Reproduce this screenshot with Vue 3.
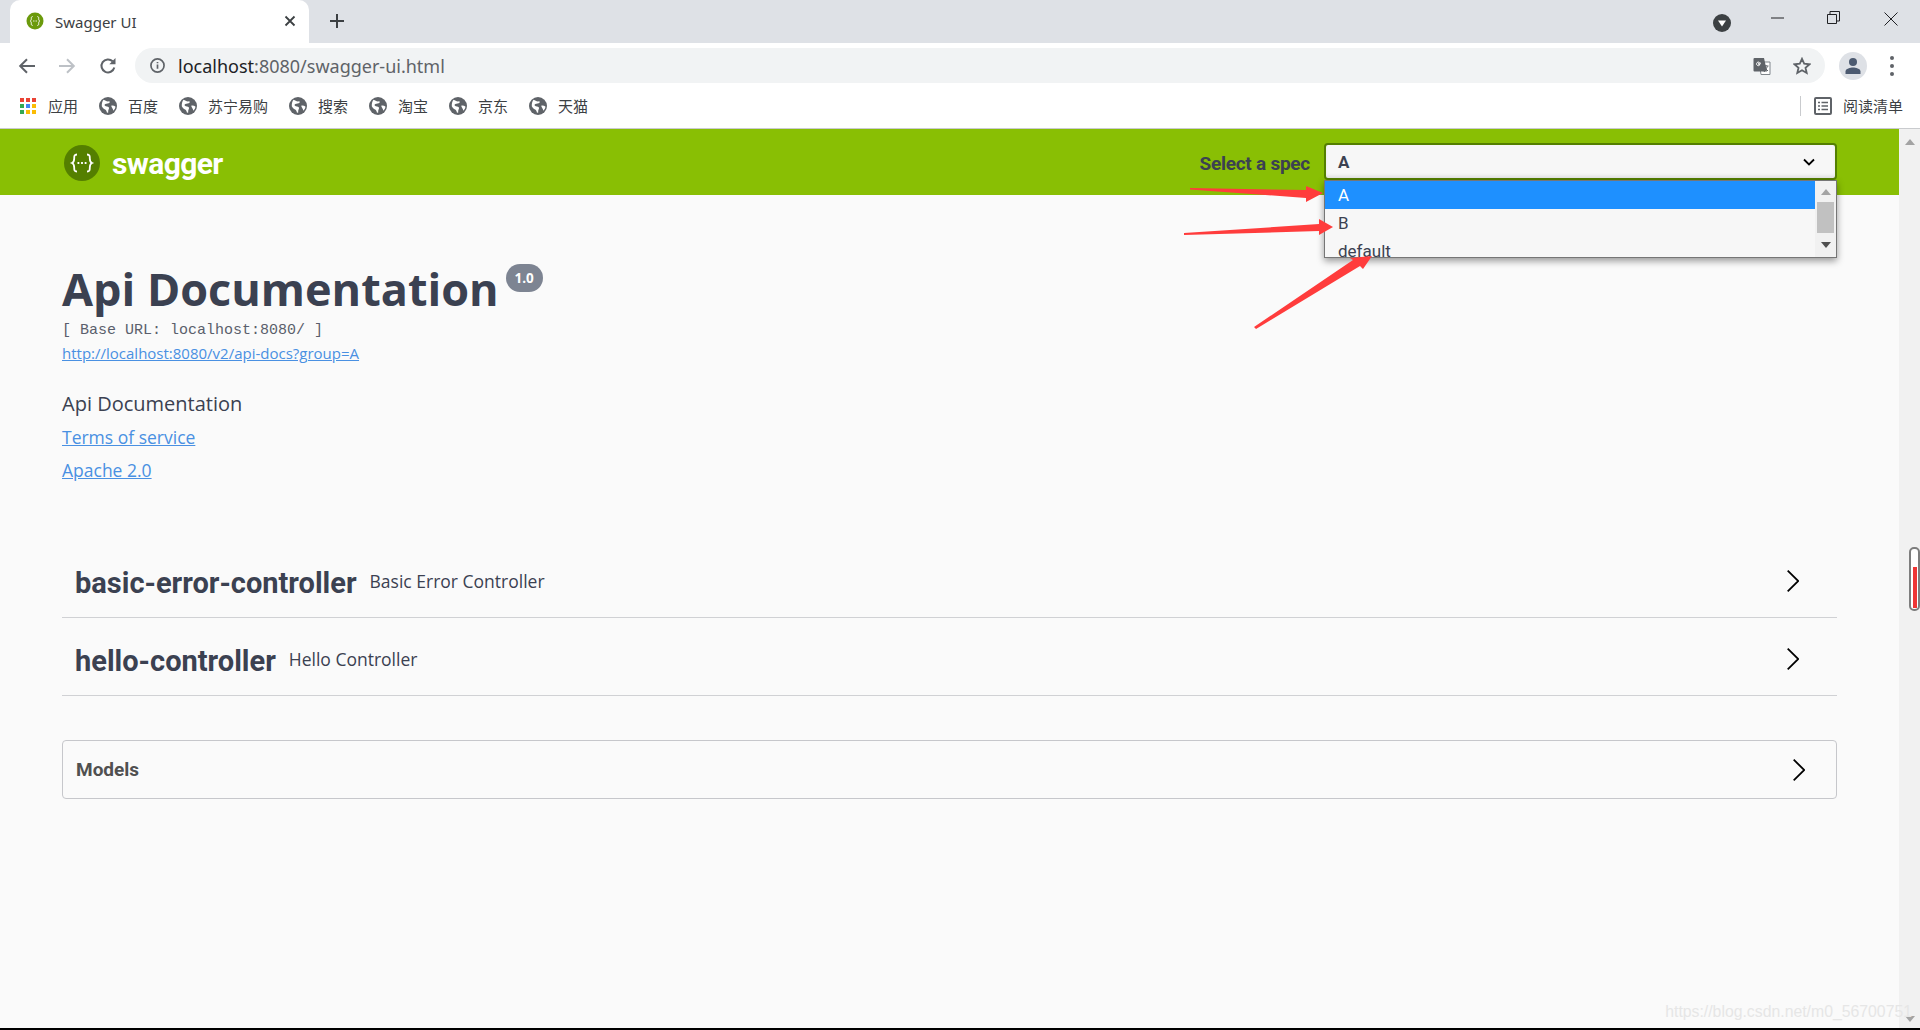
<script setup>
const bookmarks = ['百度', '苏宁易购', '搜索', '淘宝', '京东', '天猫']
const appDots = ['#ea4335', '#ea4335', '#ea4335', '#34a853', '#4285f4', '#fbbc04', '#34a853', '#fbbc04', '#fbbc04']
const tags = [
  { name: 'basic-error-controller', desc: 'Basic Error Controller' },
  { name: 'hello-controller', desc: 'Hello Controller' }
]
</script>

<template>
  <div class="window">
    <div class="tabstrip">
      <div class="tab">
        <svg class="favicon" viewBox="0 0 18 18">
          <circle cx="9" cy="9" r="8.5" fill="#6b9a0c" />
          <path d="M6.6 4.6c-1.4 0-1.3 1-1.3 2s-.1 1.9-1 2.4c.9.5 1 1.400 1 2.400s-.1 2 1.300 2M11.400 4.600c1.400 0 1.300 1 1.300 2s.1 1.900 1 2.400c-.9.5-1 1.400-1 2.400s.1 2-1.300 2" fill="none" stroke="#fff" stroke-width="1" />
          <path d="M7 9h.8M8.600 9h.8M10.200 9h.8" stroke="#fff" stroke-width="1" />
        </svg>
        <span class="tab-title">Swagger UI</span>
        <svg class="tab-close" viewBox="0 0 12 12"><path d="M1.500 1.500l9 9M10.500 1.500l-9 9" stroke="#3c4043" stroke-width="1.800" /></svg>
      </div>
      <svg class="newtab" viewBox="0 0 16 16"><path d="M8 1v14M1 8h14" stroke="#3c4043" stroke-width="2" /></svg>
      <div class="win-controls">
        <span class="tabsearch"><svg viewBox="0 0 18 18"><circle cx="9" cy="9" r="9" fill="#3c4043" /><path d="M5 6.500h8L9 12.500z" fill="#fff" /></svg></span>
        <svg class="win-min" viewBox="0 0 13 2"><path d="M0 1h13" stroke="#202124" stroke-width="1" /></svg>
        <svg class="win-restore" viewBox="0 0 13 13"><path d="M.5 3.500h9v9h-9zM3 3.500V.5h9.500V10H9.500" fill="none" stroke="#202124" stroke-width="1" /></svg>
        <svg class="win-close" viewBox="0 0 14 14"><path d="M.5.5l13 13M13.500.5l-13 13" stroke="#202124" stroke-width="1" /></svg>
      </div>
    </div>

    <div class="toolbar">
      <svg class="nav back" viewBox="0 0 18 18"><path d="M17 9H2.500M9 2.200L2.200 9 9 15.800" fill="none" stroke="#5f6368" stroke-width="2" /></svg>
      <svg class="nav forward" viewBox="0 0 18 18"><path d="M1 9h14.500M9 2.200L15.800 9 9 15.800" fill="none" stroke="#bdc1c6" stroke-width="2" /></svg>
      <svg class="nav reload" viewBox="0 0 18 18"><path d="M15.300 10.500A6.500 6.500 0 1 1 13.600 4.300" fill="none" stroke="#5f6368" stroke-width="2" /><path d="M16.500 1v6.200h-6.200z" fill="#5f6368" /></svg>
      <div class="omnibox">
        <svg class="info" viewBox="0 0 16 16"><circle cx="8" cy="8" r="7" fill="none" stroke="#5f6368" stroke-width="1.800" /><path d="M8 7v4.500M8 4.200v1.500" stroke="#5f6368" stroke-width="1.800" /></svg>
        <span class="url"><b>localhost</b>:8080/swagger-ui.html</span>
        <svg class="translate" viewBox="0 0 18 18">
          <path d="M6 5h11v12.500H8z" fill="#fff" stroke="#80868b" stroke-width="1" />
          <path d="M1.500 1h9.500l3 13.500H1.500a1 1 0 0 1-1-1V2a1 1 0 0 1 1-1z" fill="#5f6368" />
          <path d="M8 6.200H5.600v1.300h1.300c-.2.800-.8 1.200-1.500 1.200a1.800 1.800 0 1 1 1.100-3.200" fill="none" stroke="#fff" stroke-width="1" />
          <path d="M10.500 9h5M13 8v1M11 15l3.500-5.500M11.500 10.500l3.500 3.500" fill="none" stroke="#5f6368" stroke-width="1" />
        </svg>
        <svg class="star" viewBox="0 0 18 18"><path d="M9 1.800l2.200 4.900 5.300.6-4 3.500 1.200 5.200L9 13.300 4.300 16l1.200-5.200-4-3.500 5.300-.6z" fill="none" stroke="#5f6368" stroke-width="1.800" stroke-linejoin="miter" /></svg>
      </div>
      <span class="avatar"><svg viewBox="0 0 18 18"><circle cx="9" cy="5" r="4" fill="#4c5a70" /><path d="M1.500 17v-2.500c0-3 5-4 7.500-4s7.500 1 7.500 4V17z" fill="#4c5a70" /></svg></span>
      <span class="dots"><i></i><i></i><i></i></span>
    </div>

    <div class="bookmarks">
      <div class="bm-apps">
        <span class="apps-grid"><i v-for="(c, i) in appDots" :key="i" :style="{ background: c }"></i></span>
        <span class="bm-label">应用</span>
      </div>
      <div v-for="b in bookmarks" :key="b" class="bm">
        <svg class="globe" viewBox="0 0 18 18">
          <circle cx="9" cy="9" r="9" fill="#5f6368" />
          <path d="M4.500 2.800c1.800.6 2.800 1.600 4.300 1.600l1.500-.2c.8.700.3 1.700-.7 2-1.500.4-3.200.2-3.900 1.300-.6 1 .6 1.900 2.200 1.900 1.700.1 2.500 1 2 2.300-.4 1.100-.9 2-.6 3.700L8 15.800c-.3-1.400-.9-2.500-1.900-3.200-1.300-.9-2.600-1.900-3.300-3.400C2.600 7 3.200 4.400 4.500 2.800zM12.500 8.500c1.300-.3 2.800.1 3.900 1 .1 1.500-.8 3.200-2.100 4.200-.2-1.200-.5-2.100-1.100-2.800-.5-.7-1.300-2.100-.7-2.400z" fill="#fff" />
        </svg>
        <span class="bm-label">{{ b }}</span>
      </div>
      <div class="reading">
        <span class="divider"></span>
        <svg class="list-icon" viewBox="0 0 18 18">
          <rect x="1" y="1" width="16" height="16" rx="1" fill="none" stroke="#5f6368" stroke-width="2" />
          <path d="M4 5.500h2M7.500 5.500H14M4 9h2M7.500 9H14M4 12.500h2M7.500 12.500H14" stroke="#5f6368" stroke-width="1.500" />
        </svg>
        <span class="bm-label">阅读清单</span>
      </div>
    </div>

    <div class="viewport">
      <div class="page">
        <div class="topbar">
          <svg class="logo" viewBox="0 0 36 36">
            <circle cx="18" cy="18" r="18" fill="#547f00" />
            <path d="M13 9.500c-3 0-2.800 2-2.800 4s-.2 3.600-2.200 4.500c2 .9 2.200 2.500 2.200 4.500s-.2 4 2.800 4M23 9.500c3 0 2.800 2 2.800 4s.2 3.600 2.200 4.500c-2 .9-2.200 2.500-2.200 4.500s.2 4-2.800 4" fill="none" stroke="#fff" stroke-width="1.800" />
            <path d="M13.500 18h1.800M17.100 18h1.800M20.700 18h1.800" stroke="#fff" stroke-width="1.800" />
          </svg>
          <span class="brand">swagger</span>
          <span class="spec-label">Select a spec</span>
          <div class="select-wrap">
            <div class="select">
              <span>A</span>
              <svg class="select-caret" viewBox="0 0 12 8"><path d="M1 1.500l5 5 5-5" fill="none" stroke="#000" stroke-width="1.800" /></svg>
            </div>
            <div class="listbox">
              <div class="options">
                <div class="option selected">A</div>
                <div class="option">B</div>
                <div class="option">default</div>
              </div>
              <div class="list-scroll">
                <svg class="lb-arrow" viewBox="0 0 10 6"><path d="M5 0l5 6H0z" fill="#a3a3a3" /></svg>
                <span class="lb-thumb"></span>
                <svg class="lb-arrow down" viewBox="0 0 10 6"><path d="M0 0h10L5 6z" fill="#505050" /></svg>
              </div>
            </div>
          </div>
        </div>

        <div class="content">
          <div class="title-row">
            <h1>Api Documentation</h1>
            <span class="badge">1.0</span>
          </div>
          <div class="base-url">[ Base URL: localhost:8080/ ]</div>
          <a class="link docs">http://localhost:8080/v2/api-docs?group=A</a>
          <p class="desc">Api Documentation</p>
          <a class="link info-link terms">Terms of service</a>
          <a class="link info-link">Apache 2.0</a>

          <div class="tags">
            <div v-for="t in tags" :key="t.name" class="tag">
              <span class="tag-name">{{ t.name }}</span>
              <span class="tag-desc">{{ t.desc }}</span>
              <svg class="chevron" viewBox="0 0 12 22"><path d="M.7.7L11.300 11 .7 21.300" fill="none" stroke="#000" stroke-width="1.800" /></svg>
            </div>
          </div>

          <div class="models">
            <span class="models-title">Models</span>
            <svg class="chevron" viewBox="0 0 12 22"><path d="M.7.7L11.300 11 .7 21.300" fill="none" stroke="#000" stroke-width="1.800" /></svg>
          </div>
        </div>
      </div>

      <div class="scrollbar">
        <svg class="sb-arrow" viewBox="0 0 10 6"><path d="M5 0l5 6H0z" fill="#a3a3a3" /></svg>
        <svg class="sb-arrow" viewBox="0 0 10 6"><path d="M0 0h10L5 6z" fill="#a3a3a3" /></svg>
      </div>

      <span class="sb-marker"><i></i></span>
      <span class="watermark">https://blog.csdn.net/m0_56700751</span>
    </div>
    <div class="edge"></div>

    <!-- red arrows annotated over the screenshot -->
    <svg class="annotations" viewBox="0 0 1920 1030">
      <polygon points="1190,188 1190,189.500 1306,198 1306,202 1323,193 1306,186 1306,190" />
      <polygon points="1184,233 1184,235 1319,231 1319,235 1333,227 1319,219 1319,224" />
      <polygon points="1254,327 1256,329 1360,266 1363,269 1372,256 1350,258 1353,260" />
    </svg>
  </div>
</template>

<style>
html, body { margin: 0; padding: 0; background: #fff; overflow: hidden; }
</style>

<style scoped>
.window {
  position: relative;
  width: 1920px;
  height: 1030px;
  overflow: hidden;
  display: flex;
  flex-direction: column;
  font-family: "Noto Sans", "Noto Sans CJK SC", sans-serif;
  color: #3b4151;
}
svg { display: block; flex: none; }

/* tab strip */
.tabstrip {
  height: 43px;
  flex: none;
  background: #dee1e6;
  display: flex;
  align-items: center;
  padding-left: 10px;
}
.tab {
  width: 299px;
  height: 43px;
  box-sizing: border-box;
  background: #fff;
  border-radius: 10px 10px 0 0;
  display: flex;
  align-items: center;
  padding-left: 16px;
}
.favicon { width: 18px; height: 18px; margin-top: -2px; }
.tab-title { margin-left: 11px; font-size: 15px; color: #3c4043; }
.tab-close { width: 12px; height: 12px; margin-left: auto; margin-right: 13px; margin-top: -2px; }
.newtab { width: 16px; height: 16px; margin-left: 20px; margin-top: -2px; }
.win-controls { margin-left: auto; display: flex; align-items: center; height: 43px; position: relative; }
.tabsearch { width: 18px; height: 18px; margin-right: 40px; margin-top: 2px; }
.win-min { width: 13px; height: 2px; margin-right: 43px; margin-top: -8px; }
.win-restore { width: 13px; height: 13px; margin-right: 44px; margin-top: -9px; }
.win-close { width: 14px; height: 14px; margin-right: 22px; margin-top: -6px; }

/* toolbar */
.toolbar {
  height: 45px;
  flex: none;
  box-sizing: border-box;
  background: #fff;
  display: flex;
  align-items: center;
  padding: 5px 0 5px 18px;
}
.nav { width: 18px; height: 18px; }
.forward { margin-left: 22px; }
.reload { margin-left: 23px; }
.omnibox {
  margin-left: 18px;
  width: 1690px;
  height: 35px;
  background: #f1f3f4;
  border-radius: 18px;
  display: flex;
  align-items: center;
  padding-left: 15px;
  box-sizing: border-box;
}
.info { width: 15px; height: 15px; }
.url { margin-left: 13px; font-size: 18px; color: #5f6368; }
.url b { font-weight: 400; color: #202124; }
.translate { width: 18px; height: 18px; margin-left: auto; }
.star { width: 18px; height: 18px; margin-left: 22px; margin-right: 14px; }
.avatar {
  width: 28px;
  height: 28px;
  border-radius: 50%;
  background: #dee1e6;
  margin-left: 14px;
  display: flex;
  align-items: center;
  justify-content: center;
}
.avatar svg { width: 18px; height: 18px; }
.dots { margin-left: 23px; display: flex; flex-direction: column; gap: 4px; }
.dots i { width: 4px; height: 4px; border-radius: 50%; background: #5f6368; display: block; }

/* bookmarks */
.bookmarks {
  height: 41px;
  flex: none;
  box-sizing: border-box;
  background: #fff;
  border-bottom: 1px solid #c9cbce;
  display: flex;
  align-items: center;
  gap: 21px;
  padding: 0 17px 5px 20px;
}
.bm-apps { display: flex; align-items: center; }
.apps-grid { width: 16px; height: 16px; display: grid; grid-template-columns: repeat(3, 4px); grid-auto-rows: 4px; gap: 2px; }
.apps-grid i { display: block; }
.bm-label { font-size: 15px; color: #3c4043; white-space: nowrap; }
.bm-apps .bm-label { margin-left: 12px; }
.bm { display: flex; align-items: center; }
.globe { width: 18px; height: 18px; margin-right: 11px; }
.reading { margin-left: auto; display: flex; align-items: center; }
.divider { width: 1px; height: 20px; background: #c9cbce; margin-right: 13px; }
.list-icon { width: 18px; height: 18px; margin-right: 11px; }

/* viewport */
.viewport {
  flex: 1;
  min-height: 0;
  position: relative;
  display: flex;
  background: #fafafa;
}
.page { flex: 1; min-width: 0; }
.scrollbar {
  width: 21px;
  flex: none;
  background: #f1f1f1;
  display: flex;
  flex-direction: column;
  justify-content: space-between;
  align-items: center;
  padding: 10px 0 6px;
  box-sizing: border-box;
}
.sb-arrow { width: 10px; height: 6px; }
.sb-marker {
  position: absolute;
  left: 1909px;
  top: 418px;
  width: 11px;
  height: 64px;
  box-sizing: border-box;
  border: 2px solid #7d7d7d;
  border-radius: 5px;
  background: #fff;
  display: flex;
  align-items: flex-end;
  justify-content: center;
  padding-bottom: 1px;
}
.sb-marker i { display: block; width: 4px; height: 41px; background: #ee3535; }
.watermark {
  position: absolute;
  right: 8px;
  bottom: 7px;
  font-family: "Liberation Sans", sans-serif;
  font-size: 15.800px;
  color: #e6e6e6;
}
.edge { height: 2px; flex: none; background: #000; }

/* swagger topbar */
.topbar {
  height: 66px;
  box-sizing: border-box;
  padding: 2px 62px 0 64px;
  background: #89bf04;
  display: flex;
  align-items: center;
}
.logo { width: 36px; height: 36px; }
.brand {
  margin-left: 12px;
  font-family: Roboto, sans-serif;
  font-weight: 700;
  font-size: 30px;
  color: #fff;
  letter-spacing: -.6px;
}
.spec-label {
  margin-left: auto;
  margin-right: 14px;
  font-family: Roboto, sans-serif;
  font-weight: 700;
  font-size: 19px;
  color: #3b4151;
  letter-spacing: -.25px;
}
.select-wrap { position: relative; width: 513px; margin-top: -3px; }
.select {
  height: 37px;
  box-sizing: border-box;
  border: 2px solid #547f00;
  border-radius: 4px;
  background: #f7f7f7;
  box-shadow: inset 0 -3px 3px rgba(0,0,0,.06);
  display: flex;
  align-items: center;
  justify-content: space-between;
  padding: 0 20px 0 12px;
  font-family: Roboto, sans-serif;
  font-weight: 700;
  font-size: 17px;
}
.select-caret { width: 12px; height: 8px; }
.listbox {
  position: absolute;
  left: 0;
  right: 0;
  top: 100%;
  height: 78px;
  box-sizing: border-box;
  background: #f7f7f7;
  border: 1px solid #767676;
  box-shadow: 0 3px 7px rgba(0,0,0,.4);
  display: flex;
  overflow: hidden;
  z-index: 2;
}
.options { flex: 1; min-width: 0; }
.option {
  height: 28px;
  line-height: 28px;
  padding-left: 13px;
  font-family: Roboto, sans-serif;
  font-size: 17px;
}
.option.selected { background: #1e90ff; color: #fff; }
.list-scroll {
  width: 21px;
  flex: none;
  background: #f1f1f1;
  display: flex;
  flex-direction: column;
  align-items: center;
  padding-top: 8px;
  box-sizing: border-box;
}
.lb-arrow { width: 10px; height: 6px; }
.lb-thumb { width: 17px; height: 31px; background: #c1c1c1; margin-top: 7px; }
.lb-arrow.down { margin-top: 9px; }

/* content */
.content { padding: 0 62px; }
.title-row { display: flex; align-items: flex-start; padding-top: 67px; height: 53px; }
h1 {
  margin: 0;
  font-family: "Open Sans", sans-serif;
  font-weight: 700;
  font-size: 45px;
  line-height: 53px;
  white-space: nowrap;
}
.badge {
  margin: 2px 0 0 7px;
  width: 37px;
  height: 28px;
  border-radius: 14px;
  background: #7d8492;
  color: #fff;
  font-family: "Open Sans", sans-serif;
  font-weight: 700;
  font-size: 13.500px;
  line-height: 28px;
  text-align: center;
}
.base-url {
  margin-top: 6px;
  height: 20px;
  line-height: 20px;
  font-family: "Liberation Mono", monospace;
  font-size: 15px;
  color: #5a5f6c;
}
.link {
  display: block;
  width: fit-content;
  font-family: "Open Sans", sans-serif;
  color: #4990e2;
  text-decoration: underline;
  white-space: nowrap;
}
.docs { font-size: 15px; line-height: 20px; margin-top: 2px; }
.desc { margin: 29px 0 0; font-family: "Open Sans", sans-serif; font-size: 20px; line-height: 24px; }
.info-link { font-size: 17.500px; line-height: 24px; }
.terms { margin-top: 9px; margin-bottom: 9px; }

.tags { margin-top: 58px; }
.tag {
  height: 78px;
  box-sizing: border-box;
  border-bottom: 1px solid #d0d1d4;
  display: flex;
  align-items: center;
  padding: 8px 38px 0 13px;
}
.tag-name {
  font-family: Roboto, sans-serif;
  font-weight: 700;
  font-size: 29px;
  white-space: nowrap;
}
.tag-desc {
  margin: -3px 0 0 13px;
  font-family: "Open Sans", sans-serif;
  font-size: 17.500px;
  white-space: nowrap;
}
.chevron { width: 12px; height: 22px; margin-left: auto; }
.tag .chevron { margin-top: -4px; }
.models {
  margin-top: 44px;
  height: 59px;
  box-sizing: border-box;
  border: 1px solid #c6c7cb;
  border-radius: 4px;
  display: flex;
  align-items: center;
  padding: 0 31px 0 13px;
}
.models-title {
  font-family: Roboto, sans-serif;
  font-weight: 700;
  font-size: 19px;
  color: #505050;
}

/* annotations */
.annotations {
  position: absolute;
  left: 0;
  top: 0;
  width: 1920px;
  height: 1030px;
  pointer-events: none;
  z-index: 5;
}
.annotations polygon { fill: #ff3c3c; }
</style>
